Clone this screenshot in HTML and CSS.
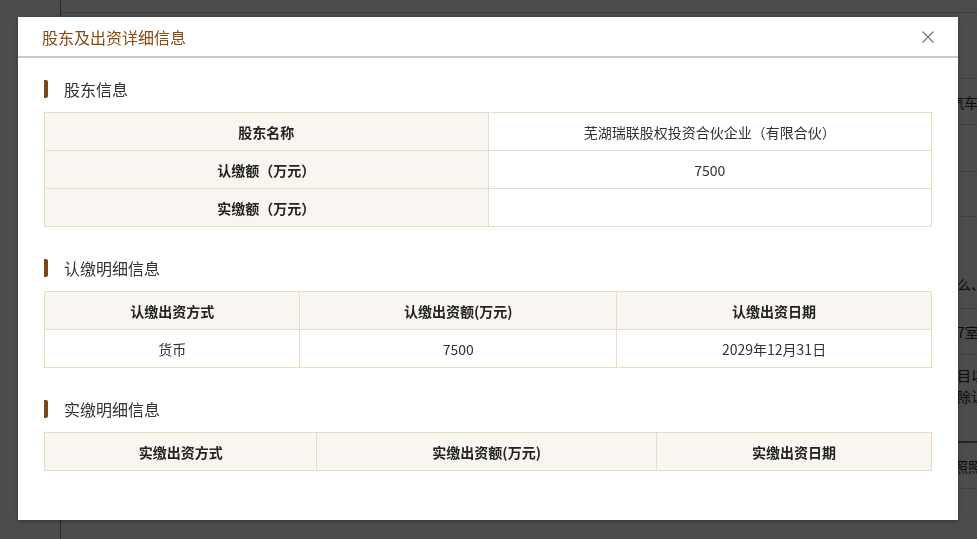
FILE: index.html
```html
<!DOCTYPE html>
<html>
    <head>
        <meta charset="utf-8">
        <title>股东及出资详细信息</title>
        <link rel="stylesheet" href="styles.css">
    </head>
    <body>
        <!-- underlying detail page -->
        <div class="page">
            <div class="side"></div>
            <div class="main">
                <div class="topbar"></div>
                <div class="row h66"><span></span><span class="val"></span></div>
                <div class="row h46"><span></span><span class="val pull">汽车</span></div>
                <div class="row h47"><span></span><span class="val"></span></div>
                <div class="row h45"><span></span><span class="val"></span></div>
                <div class="row h92 bottom"><span></span><span class="val">么、</span></div>
                <div class="row h46"><span></span><span class="val">7室</span></div>
                <div class="row h88 brown top"><span></span><span class="val">目以<br>除让</span></div>
                <div class="row h46"><span></span><span class="val pull-s">照照</span></div>
            </div>
        </div>

        <div class="mask"></div>

        <div class="dialog">
            <div class="dialog-head">
                <span class="dialog-title">股东及出资详细信息</span>
                <span class="close">
                    <svg width="12" height="12" viewBox="0 0 12 12">
                        <path d="M0.5 0.5 L11.5 11.5 M11.5 0.5 L0.5 11.5" stroke="#777" stroke-width="1.2" fill="none"/>
                    </svg>
                </span>
            </div>

            <div class="dialog-body">
                <div class="section-title">股东信息</div>
                <table class="info half">
                    <tr>
                        <th>股东名称</th>
                        <td>芜湖瑞联股权投资合伙企业（有限合伙）</td>
                    </tr>
                    <tr>
                        <th>认缴额（万元）</th>
                        <td>7500</td>
                    </tr>
                    <tr>
                        <th>实缴额（万元）</th>
                        <td></td>
                    </tr>
                </table>

                <div class="section-title">认缴明细信息</div>
                <table class="info subscribed">
                    <tr>
                        <th>认缴出资方式</th>
                        <th>认缴出资额(万元)</th>
                        <th>认缴出资日期</th>
                    </tr>
                    <tr>
                        <td>货币</td>
                        <td>7500</td>
                        <td>2029年12月31日</td>
                    </tr>
                </table>

                <div class="section-title">实缴明细信息</div>
                <table class="info paid">
                    <tr>
                        <th>实缴出资方式</th>
                        <th>实缴出资额(万元)</th>
                        <th>实缴出资日期</th>
                    </tr>
                </table>
            </div>
        </div>
    </body>
</html>
```

FILE: styles.css
```css
*{
    box-sizing: border-box;
}

body{
    margin: 0;
    width: 977px;
    height: 539px;
    overflow: hidden;
    background: #fff;
    font-family: "Noto Sans CJK SC", "Noto Sans", sans-serif;
    color: #333;
}

/* page behind the dialog */
.page{
    display: flex;
    height: 539px;
}

.side{
    width: 60px;
    flex-shrink: 0;
}

.main{
    flex: 1;
    border-left: 1px solid #b08552;
    font-size: 14px;
}

.topbar{
    height: 13px;
    border-bottom: 1px solid #d8d2c4;
}

.row{
    display: grid;
    grid-template-columns: 896px 1fr;
    align-items: center;
    border-bottom: 1px solid #d8d2c4;
    white-space: nowrap;
    overflow: hidden;
    line-height: 20px;
}

.row.bottom{
    align-items: end;
    padding-bottom: 14px;
}

.row.top{
    align-items: start;
    padding-top: 10px;
    line-height: 21px;
}

.row.brown{
    border-bottom: 2px solid #a0784a;
}

.h66{ height: 66px; }
.h46{ height: 46px; }
.h47{ height: 47px; }
.h45{ height: 45px; }
.h92{ height: 92px; }
.h88{ height: 88px; }

.val{
    color: #2a2a2a;
}

.pull{
    margin-left: -7px;
}

.pull-s{
    margin-left: -3px;
}

.mask{
    position: fixed;
    inset: 0;
    background: rgba(0, 0, 0, 0.7);
}

/* dialog */
.dialog{
    position: absolute;
    left: 18px;
    top: 17px;
    width: 940px;
    height: 503px;
    background: #fff;
    box-shadow: 0 1px 4px rgba(0, 0, 0, 0.3);
}

.dialog-head{
    height: 41px;
    display: flex;
    align-items: center;
    justify-content: space-between;
    padding: 0 24px;
    border-bottom: 2px solid #c9c9c9;
}

.dialog-title{
    font-size: 16px;
    color: #8b4a12;
    line-height: 20px;
}

.close{
    display: flex;
}

.dialog-body{
    padding: 22px 26px;
}

.section-title{
    position: relative;
    height: 18px;
    line-height: 18px;
    padding-left: 20px;
    font-size: 16px;
    color: #333;
    margin-bottom: 14px;
}

.section-title::before{
    content: "";
    position: absolute;
    left: 0;
    top: 0;
    width: 4px;
    height: 18px;
    background: #7b4514;
    border-radius: 0 2px 2px 0;
}

.info{
    width: 100%;
    border-collapse: collapse;
    table-layout: fixed;
    font-size: 14px;
    margin-bottom: 32px;
}

.info th,
.info td{
    border: 1px solid #eadbc1;
    height: 38px;
    padding: 0 10px;
    text-align: center;
    line-height: 20px;
    color: #333;
}

.info th{
    background: #f9f6f1;
    font-weight: bold;
    color: #222;
}

.half th{
    width: 50%;
}

.subscribed th:nth-child(1){ width: 28.8%; }
.subscribed th:nth-child(2){ width: 35.7%; }

.paid th:nth-child(1){ width: 30.7%; }
.paid th:nth-child(2){ width: 38.3%; }
```
